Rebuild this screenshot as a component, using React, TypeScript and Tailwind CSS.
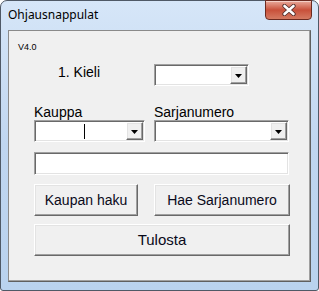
const ui = { fontFamily: '"Liberation Sans", Arial, sans-serif' };

const sunken =
  'border border-t-[#a0a0a0] border-l-[#a0a0a0] border-r-white border-b-white shadow-[inset_1px_1px_0_#696969,inset_-1px_-1px_0_#e3e3e3] bg-white';
const raised =
  'border border-t-white border-l-white border-r-[#696969] border-b-[#696969] shadow-[inset_-1px_-1px_0_#a0a0a0,inset_1px_1px_0_#e3e3e3] bg-[#f0f0f0]';

const ComboBox = ({ width, caret }: { width: string; caret?: boolean }) => {
  return (
    <div className={`${width} h-[22px] flex p-px ${sunken}`}>
      <div className="flex-1 relative">
        {caret && <div className="absolute left-[48px] top-[2px] w-px h-[15px] bg-black" />}
      </div>
      <div className={`w-[17px] h-full flex items-center justify-center pt-[2px] ${raised}`}>
        <svg width="7" height="4" viewBox="0 0 7 4">
          <polygon points="0,0 7,0 3.5,4" fill="#000" />
        </svg>
      </div>
    </div>
  );
};

const Button = ({ label, width, size = 'text-[14px]' }: { label: string; width: string; size?: string }) => {
  return (
    <button className={`${width} h-[32px] ${size} leading-[16px] text-[#0a0a1a] ${raised}`} style={ui}>
      {label}
    </button>
  );
};

const CloseButton = () => {
  return (
    <div className="w-[47px] h-[20px] -mt-px mr-[6px] rounded-b-[4px] border border-[#6b2a20] bg-linear-to-b from-[#e8aa9c] via-[#c8503a] to-[#d47a62] shadow-[inset_0_1px_0_#f4cfc6] flex items-center justify-center">
      <svg width="16" height="12" viewBox="0 0 16 12">
        <path d="M3.5 2 L12.5 10 M12.5 2 L3.5 10" stroke="#4a2a28" strokeWidth="4.2" strokeLinecap="round" />
        <path d="M3.5 2 L12.5 10 M12.5 2 L3.5 10" stroke="#ffffff" strokeWidth="2.6" strokeLinecap="round" />
      </svg>
    </div>
  );
};

export default function App() {
  return (
    <div className="w-[319px] h-[291px] flex flex-col rounded-t-[7px] rounded-b-[3px] border border-[#4f5966] bg-linear-to-b from-[#d6e6f8] via-[#c0d6f0] to-[#b9d2ee]">
      <div className="h-[29px] flex items-start justify-between">
        <span className="mt-[6px] pl-[7px] text-[12px] leading-[16px] text-black" style={{ fontFamily: '"Noto Sans", "Open Sans", sans-serif' }}>
          Ohjausnappulat
        </span>
        <CloseButton />
      </div>
      <div className="mx-[7px] h-[252px] flex flex-col bg-[#f0f0f0] border border-t-[#8a8a8a] border-l-[#8a8a8a] border-r-[#5f5f5f] border-b-[#5f5f5f] shadow-[inset_-1px_-1px_0_#a0a0a0]" style={ui}>
        <div className="mt-[11px] pl-[9px] h-[10px] text-[9px] leading-[10px] text-black">V4.0</div>
        <div className="mt-[12px] pl-[49px] flex items-start">
          <span className="w-[96px] text-[14px] leading-[16px] text-black">1. Kieli</span>
          <ComboBox width="w-[95px]" />
        </div>
        <div className="mt-[19px] pl-[25px] flex h-[15px] text-[14px] leading-[15px] text-black">
          <span className="w-[120px]">Kauppa</span>
          <span>Sarjanumero</span>
        </div>
        <div className="pl-[25px] flex gap-[9px]">
          <ComboBox width="w-[111px]" caret />
          <ComboBox width="w-[135px]" />
        </div>
        <div className="mt-[10px] pl-[25px]">
          <div className={`w-[255px] h-[23px] ${sunken}`} />
        </div>
        <div className="mt-[9px] pl-[25px] flex gap-[16px]">
          <Button label="Kaupan haku" width="w-[104px]" />
          <Button label="Hae Sarjanumero" width="w-[136px]" />
        </div>
        <div className="mt-[8px] pl-[25px]">
          <Button label="Tulosta" width="w-[256px]" size="text-[15px]" />
        </div>
      </div>
    </div>
  );
}
